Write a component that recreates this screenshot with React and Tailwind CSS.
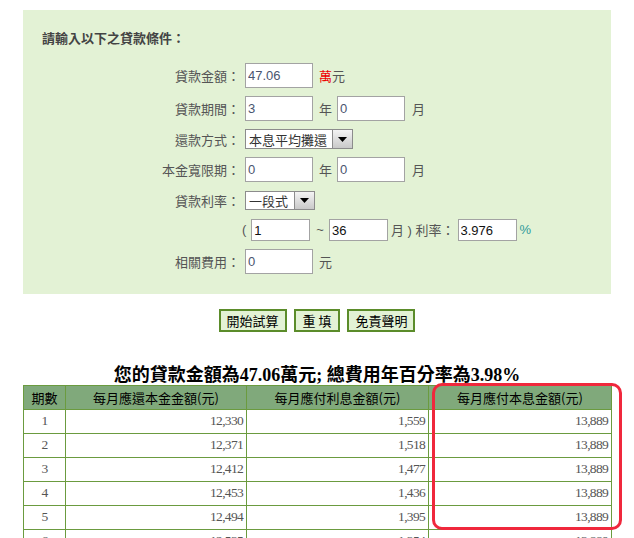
const cjk = { fontFamily: '"Noto Sans CJK TC", "Noto Sans CJK SC", sans-serif' };
const arial = { fontFamily: '"Liberation Sans", Arial, sans-serif' };
const serif = { fontFamily: '"Liberation Serif", "Noto Sans CJK TC", serif' };

function Field({ value, w = "w-[68px]", h = "h-[25px]", dark }) {
  return (
    <input
      readOnly
      value={value}
      style={arial}
      className={`${w} ${h} border border-[#a3a3a3] bg-white pl-[2px] text-[13px] outline-none ${dark ? "text-[#111]" : "text-[#4a5570]"}`}
    />
  );
}

function Select({ text, w, h }) {
  return (
    <div className={`flex ${w} ${h} border border-[#8c8c8c] bg-white`}>
      <div className="flex-1 pl-[3px] text-[13px] leading-none text-[#333] flex items-center" style={cjk}>
        {text}
      </div>
      <div className="w-[20px] flex items-center justify-center border-l border-[#8c8c8c] bg-gradient-to-b from-[#f4f4f4] to-[#c9c9c9]">
        <svg width="9" height="5" viewBox="0 0 9 5">
          <path d="M0 0h9L4.5 5z" fill="#000" />
        </svg>
      </div>
    </div>
  );
}

function Row({ label, children, className = "" }) {
  return (
    <div className={`flex items-center ${className}`}>
      <div className="w-[217px] text-right text-[13px] text-[#555] leading-none" style={cjk}>
        {label}
      </div>
      <div className="ml-[5px] flex items-center text-[13px] text-[#555]" style={cjk}>
        {children}
      </div>
    </div>
  );
}

const rows = [
  [1, "12,330", "1,559", "13,889"],
  [2, "12,371", "1,518", "13,889"],
  [3, "12,412", "1,477", "13,889"],
  [4, "12,453", "1,436", "13,889"],
  [5, "12,494", "1,395", "13,889"],
  [6, "12,535", "1,354", "13,889"],
  [7, "12,576", "1,313", "13,889"],
];

export default function App() {
  return (
    <div className="relative w-[634px] h-[538px] overflow-hidden bg-white">
      <div className="ml-[23px] mt-[10px] w-[588px] h-[284px] bg-[#e3f2d5] pt-[19px]">
        <div className="pl-[19px] text-[13px] font-bold text-[#444] leading-[18px]" style={cjk}>
          請輸入以下之貸款條件：
        </div>
        <div className="mt-[16px] flex flex-col gap-[8px]">
          <Row label="貸款金額：">
            <Field value="47.06" />
            <span className="ml-[6px] text-[#e00]">萬</span>
            <span>元</span>
          </Row>
          <Row label="貸款期間：">
            <Field value="3" />
            <span className="ml-[6px]">年</span>
            <span className="ml-[5px]"><Field value="0" /></span>
            <span className="ml-[7px]">月</span>
          </Row>
          <Row label="還款方式：">
            <Select text="本息平均攤還" w="w-[108px]" h="h-[20px]" />
          </Row>
          <Row label="本金寬限期：">
            <Field value="0" />
            <span className="ml-[6px]">年</span>
            <span className="ml-[5px]"><Field value="0" /></span>
            <span className="ml-[7px]">月</span>
          </Row>
          <Row label="貸款利率：" className="mt-[1px]">
            <Select text="一段式" w="w-[70px]" h="h-[19px]" />
          </Row>
          <Row label="" className="mt-[1px]">
            <span className="-ml-[3px] mr-[5px]" style={arial}>(</span>
            <Field value="1" w="w-[59px]" h="h-[22px]" dark />
            <span className="ml-[6px] mr-[5px]" style={arial}>~</span>
            <Field value="36" w="w-[59px]" h="h-[22px]" dark />
            <span className="ml-[3px] mr-[3px]">月<span style={arial}> ) </span>利率：</span>
            <Field value="3.976" w="w-[59px]" h="h-[22px]" dark />
            <span className="ml-[3px] text-[#2e9a9a]" style={arial}>%</span>
          </Row>
          <Row label="相關費用：">
            <Field value="0" />
            <span className="ml-[6px]">元</span>
          </Row>
        </div>
      </div>

      <div className="mt-[15px] flex justify-center gap-[7px]" style={cjk}>
        <button className="h-[23px] border-2 border-[#5b8c2a] bg-[#e3f2d5] px-[6px] text-[13px] leading-none text-black">開始試算</button>
        <button className="h-[23px] border-2 border-[#5b8c2a] bg-[#e3f2d5] px-[7px] text-[13px] leading-none text-black">重 填</button>
        <button className="h-[23px] border-2 border-[#5b8c2a] bg-[#e3f2d5] px-[6px] text-[13px] leading-none text-black">免責聲明</button>
      </div>

      <div className="mt-[33px] h-[20px] text-center text-[18px] font-bold leading-[20px] text-black" style={serif}>
        您的貸款金額為47.06萬元; 總費用年百分率為3.98%
      </div>

      <table className="ml-[23px] w-[588px] table-fixed border-collapse">
        <colgroup>
          <col className="w-[42px]" />
          <col className="w-[181px]" />
          <col className="w-[182px]" />
          <col className="w-[183px]" />
        </colgroup>
        <thead>
          <tr className="h-[24px] bg-[#80a97b] text-[13px] text-black" style={cjk}>
            <th className="border border-[#6b9b3f] font-normal">期數</th>
            <th className="border border-[#6b9b3f] font-normal">每月應還本金金額(元)</th>
            <th className="border border-[#6b9b3f] font-normal">每月應付利息金額(元)</th>
            <th className="border border-[#6b9b3f] font-normal">每月應付本息金額(元)</th>
          </tr>
        </thead>
        <tbody className="text-[13.5px] tracking-[-0.7px] text-[#555]" style={serif}>
          {rows.map((r) => (
            <tr key={r[0]} className="h-[24px]">
              <td className="border border-[#6b9b3f] text-center">{r[0]}</td>
              <td className="border border-[#6b9b3f] pr-[3px] text-right">{r[1]}</td>
              <td className="border border-[#6b9b3f] pr-[3px] text-right">{r[2]}</td>
              <td className="border border-[#6b9b3f] pr-[3px] text-right">{r[3]}</td>
            </tr>
          ))}
        </tbody>
      </table>

      <div className="absolute left-[432px] top-[383px] w-[190px] h-[147px] rounded-[10px] border-[3px] border-[#f0283c]" />
    </div>
  );
}
